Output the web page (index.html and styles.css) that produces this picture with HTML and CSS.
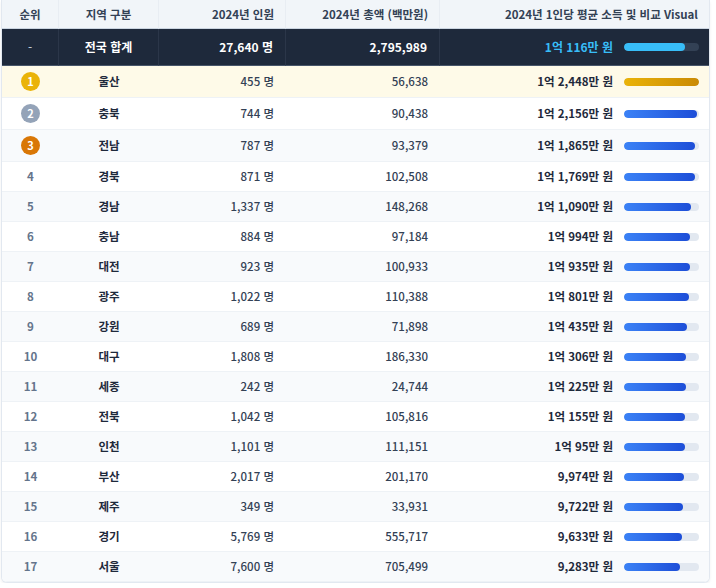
FILE: index.html
```html
<!DOCTYPE html>
<html lang="ko">
<head>
<meta charset="utf-8">
<title>지역별 1인당 평균 소득</title>
<link rel="stylesheet" href="styles.css">
</head>
<body>
<div class="card">
<table class="tbl">
<colgroup>
<col class="c-rank"><col class="c-region"><col class="c-people"><col class="c-total"><col>
</colgroup>
<thead>
<tr><th>순위</th><th>지역 구분</th><th class="r">2024년 인원</th><th class="r">2024년 총액 (백만원)</th><th class="r">2024년 1인당 평균 소득 및 비교 Visual</th></tr>
</thead>
<tbody>
<tr class="sum"><td class="rank">-</td><td class="region">전국 합계</td><td class="r">27,640 명</td><td class="r">2,795,989</td><td class="r"><div class="vis"><span class="val">1억 116만 원</span><span class="track"><span class="fill" style="width:81.27%"></span></span></div></td></tr>
<tr class="gold"><td class="rank"><span class="medal m1">1</span></td><td class="region">울산</td><td class="r">455 명</td><td class="r">56,638</td><td class="r"><div class="vis"><span class="val">1억 2,448만 원</span><span class="track"><span class="fill" style="width:100%"></span></span></div></td></tr>
<tr><td class="rank"><span class="medal m2">2</span></td><td class="region">충북</td><td class="r">744 명</td><td class="r">90,438</td><td class="r"><div class="vis"><span class="val">1억 2,156만 원</span><span class="track"><span class="fill" style="width:97.65%"></span></span></div></td></tr>
<tr><td class="rank"><span class="medal m3">3</span></td><td class="region">전남</td><td class="r">787 명</td><td class="r">93,379</td><td class="r"><div class="vis"><span class="val">1억 1,865만 원</span><span class="track"><span class="fill" style="width:95.32%"></span></span></div></td></tr>
<tr><td class="rank">4</td><td class="region">경북</td><td class="r">871 명</td><td class="r">102,508</td><td class="r"><div class="vis"><span class="val">1억 1,769만 원</span><span class="track"><span class="fill" style="width:94.55%"></span></span></div></td></tr>
<tr><td class="rank">5</td><td class="region">경남</td><td class="r">1,337 명</td><td class="r">148,268</td><td class="r"><div class="vis"><span class="val">1억 1,090만 원</span><span class="track"><span class="fill" style="width:89.09%"></span></span></div></td></tr>
<tr><td class="rank">6</td><td class="region">충남</td><td class="r">884 명</td><td class="r">97,184</td><td class="r"><div class="vis"><span class="val">1억 994만 원</span><span class="track"><span class="fill" style="width:88.32%"></span></span></div></td></tr>
<tr><td class="rank">7</td><td class="region">대전</td><td class="r">923 명</td><td class="r">100,933</td><td class="r"><div class="vis"><span class="val">1억 935만 원</span><span class="track"><span class="fill" style="width:87.85%"></span></span></div></td></tr>
<tr><td class="rank">8</td><td class="region">광주</td><td class="r">1,022 명</td><td class="r">110,388</td><td class="r"><div class="vis"><span class="val">1억 801만 원</span><span class="track"><span class="fill" style="width:86.77%"></span></span></div></td></tr>
<tr><td class="rank">9</td><td class="region">강원</td><td class="r">689 명</td><td class="r">71,898</td><td class="r"><div class="vis"><span class="val">1억 435만 원</span><span class="track"><span class="fill" style="width:83.83%"></span></span></div></td></tr>
<tr><td class="rank">10</td><td class="region">대구</td><td class="r">1,808 명</td><td class="r">186,330</td><td class="r"><div class="vis"><span class="val">1억 306만 원</span><span class="track"><span class="fill" style="width:82.79%"></span></span></div></td></tr>
<tr><td class="rank">11</td><td class="region">세종</td><td class="r">242 명</td><td class="r">24,744</td><td class="r"><div class="vis"><span class="val">1억 225만 원</span><span class="track"><span class="fill" style="width:82.14%"></span></span></div></td></tr>
<tr><td class="rank">12</td><td class="region">전북</td><td class="r">1,042 명</td><td class="r">105,816</td><td class="r"><div class="vis"><span class="val">1억 155만 원</span><span class="track"><span class="fill" style="width:81.58%"></span></span></div></td></tr>
<tr><td class="rank">13</td><td class="region">인천</td><td class="r">1,101 명</td><td class="r">111,151</td><td class="r"><div class="vis"><span class="val">1억 95만 원</span><span class="track"><span class="fill" style="width:81.10%"></span></span></div></td></tr>
<tr><td class="rank">14</td><td class="region">부산</td><td class="r">2,017 명</td><td class="r">201,170</td><td class="r"><div class="vis"><span class="val">9,974만 원</span><span class="track"><span class="fill" style="width:80.13%"></span></span></div></td></tr>
<tr><td class="rank">15</td><td class="region">제주</td><td class="r">349 명</td><td class="r">33,931</td><td class="r"><div class="vis"><span class="val">9,722만 원</span><span class="track"><span class="fill" style="width:78.10%"></span></span></div></td></tr>
<tr><td class="rank">16</td><td class="region">경기</td><td class="r">5,769 명</td><td class="r">555,717</td><td class="r"><div class="vis"><span class="val">9,633만 원</span><span class="track"><span class="fill" style="width:77.39%"></span></span></div></td></tr>
<tr><td class="rank">17</td><td class="region">서울</td><td class="r">7,600 명</td><td class="r">705,499</td><td class="r"><div class="vis"><span class="val">9,283만 원</span><span class="track"><span class="fill" style="width:74.57%"></span></span></div></td></tr>
</tbody>
</table>
</div>
</body>
</html>
```
FILE: styles.css
```css
html, body {
  margin: 0;
  padding: 0;
  background: #ffffff;
}
body {
  font-family: "Noto Sans CJK KR", "Noto Sans", sans-serif;
  color: #1e293b;
}
.card {
  width: 707px;
  margin-left: 1px;
  border: 1px solid #e2e8f0;
  border-top: none;
  border-radius: 0 0 6px 6px;
  box-shadow: 0 2px 3px rgba(15, 23, 42, 0.06);
  overflow: hidden;
  background: #ffffff;
}
.tbl {
  width: 100%;
  table-layout: fixed;
  border-collapse: separate;
  border-spacing: 0;
  font-size: 11.5px;
}
.c-rank { width: 57px; }
.c-region { width: 100px; }
.c-people { width: 127px; }
.c-total { width: 154px; }

.tbl th {
  background: #f1f5f9;
  color: #334155;
  font-weight: 700;
  font-size: 11.5px;
  line-height: 18px;
  padding: 5px 10px;
  border-bottom: 1px solid #cbd5e1;
  border-right: 1px solid #e8edf3;
  white-space: nowrap;
  text-align: center;
}
.tbl th:last-child { border-right: none; }
.tbl th.r { padding-right: 11px; text-align: right; }
.tbl td {
  line-height: 19px;
  padding: 5px 10px;
  border-bottom: 1px solid #eef2f6;
  color: #334155;
  font-weight: 500;
  white-space: nowrap;
  text-align: center;
}
.tbl td.r { text-align: right; padding-right: 12px; }
.tbl td.r:last-child { padding-right: 10px; }
.tbl tbody tr:nth-child(even) td { background: #f8fafc; }
.tbl tbody tr:nth-child(odd) td { background: #ffffff; }
.tbl tbody tr.gold td { background: #fefae8; }

.tbl td.rank {
  font-weight: 700;
  color: #64748b;
}
.tbl td.region {
  font-weight: 700;
  color: #1e293b;
}

.tbl tbody tr.sum td {
  background: #1e293b;
  color: #ffffff;
  font-weight: 700;
  font-size: 12px;
  line-height: 18px;
  padding-top: 9px;
  padding-bottom: 9px;
  border-bottom: 1px solid #475569;
  border-right: 1px solid #2b3649;
}
.tbl tbody tr.sum td:last-child { border-right: none; }
.tbl tbody tr.sum td.rank { color: #cbd5e1; font-weight: 400; }
.tbl tr.sum .val { color: #38bdf8; }

.medal {
  display: block;
  width: 19px;
  height: 19px;
  margin: 1px auto;
  border-radius: 50%;
  color: #ffffff;
  font-size: 11px;
  font-weight: 700;
  line-height: 19px;
  text-align: center;
}
.m1 { background: #eab308; }
.m2 { background: #94a3b8; }
.m3 { background: #d97706; }

.vis {
  display: flex;
  justify-content: flex-end;
  align-items: center;
  gap: 11px;
}
.val {
  font-weight: 700;
  color: #1e293b;
}
.track {
  display: block;
  width: 75px;
  height: 8px;
  border-radius: 4px;
  background: #e2e8f0;
  overflow: hidden;
}
.fill {
  display: block;
  height: 100%;
  border-radius: 4px;
  background: linear-gradient(90deg, #3b82f6, #1d4ed8);
}
.tbl tr.sum .track { background: #334155; }
.tbl tr.sum .fill { background: #38bdf8; }
.tbl tr.gold .fill { background: linear-gradient(90deg, #eab308, #ca8a04); }
```
